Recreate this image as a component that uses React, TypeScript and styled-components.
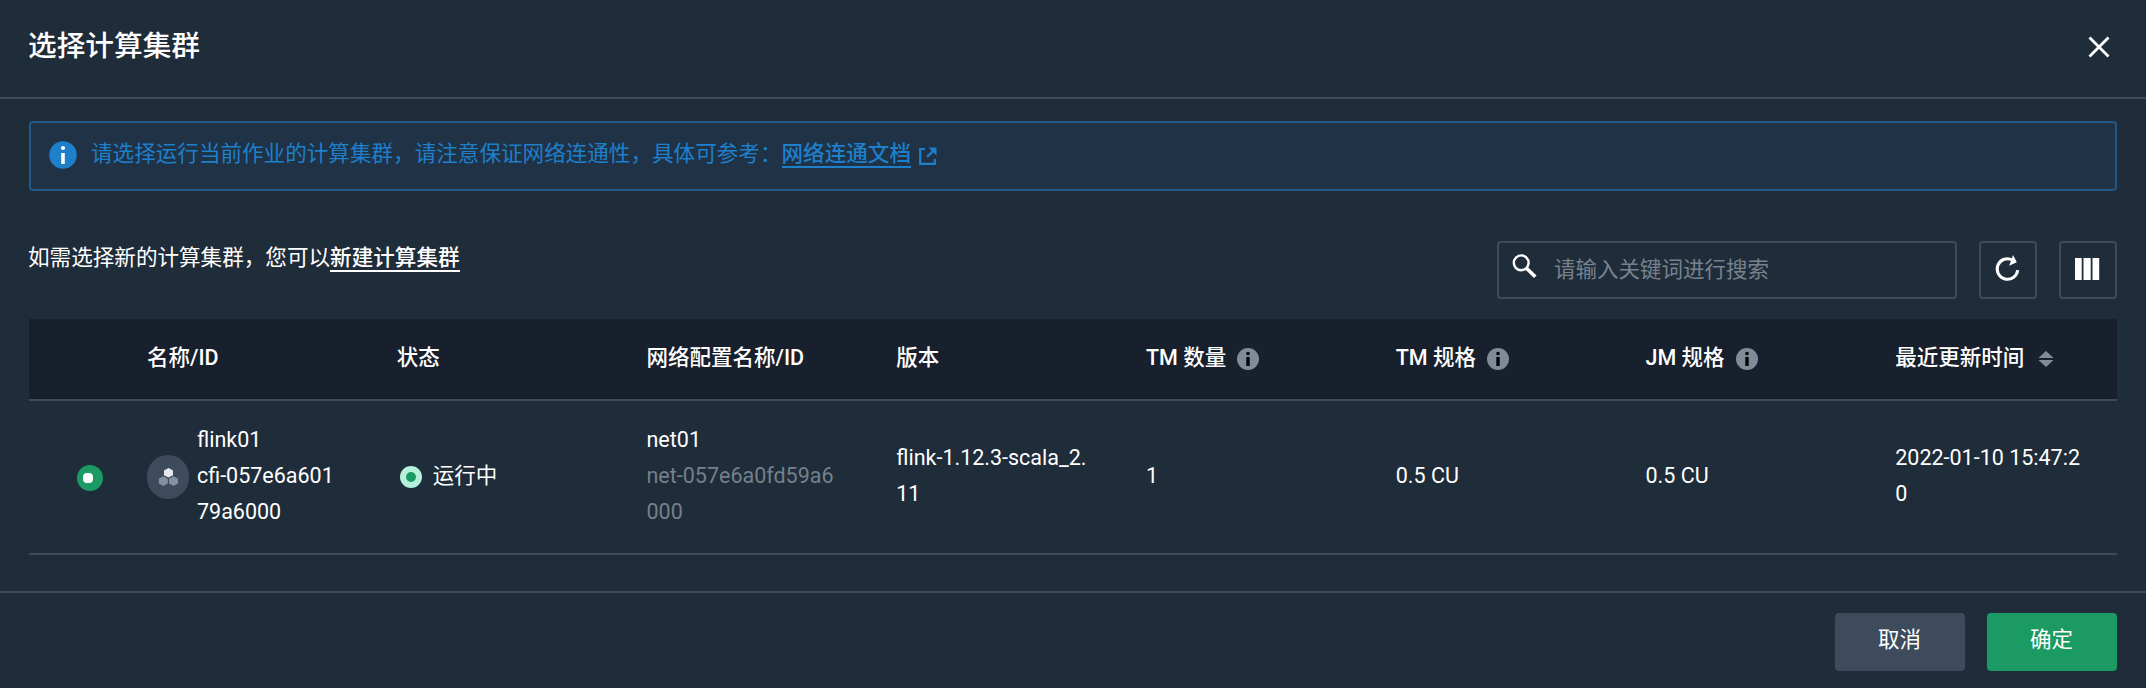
import React from "react";
import styled, { createGlobalStyle } from "styled-components";

const Global = createGlobalStyle`
  * { box-sizing: border-box; }
  body { margin: 0; background: #1f2c39; }
`;

const line = "#3d4b5d";

const Dialog = styled.div`
  display: flex;
  flex-direction: column;
  height: 688px;
  background: #1f2c39;
  color: #fff;
  font: 400 21.5px/36px Roboto, "Noto Sans CJK SC", sans-serif;
`;

const Header = styled.header`
  display: flex;
  justify-content: space-between;
  height: 99px;
  padding: 28px 36px 0 28px;
  border-bottom: 2px solid ${line};
`;

const Title = styled.h1`
  margin: 0;
  font-size: 28.67px;
  line-height: 36px;
  font-weight: 500;
`;

const CloseButton = styled.button`
  width: 22px;
  height: 22px;
  margin-top: 8px;
  padding: 0;
  border: 0;
  background: none;
  svg { display: block; }
`;

const Body = styled.main`
  flex: 1;
  padding: 22px 29px 0;
`;

const Notice = styled.section`
  display: flex;
  align-items: flex-start;
  height: 70px;
  padding: 13px 18px;
  border: 2px solid #205889;
  border-radius: 4px;
  background: #203245;
  color: #1e7fcb;
  font-size: 21.59px;
  > svg { margin: 5px 14px 0 0; flex: none; }
`;

const Link = styled.a<{ $color: string }>`
  color: ${(p) => p.$color};
  font-weight: 500;
  text-decoration: none;
  display: inline-block;
  height: 32px;
  border-bottom: 2px solid ${(p) => p.$color};
`;

const ExternalMark = styled.svg`
  margin-left: 8px;
  vertical-align: -4px;
`;

const Toolbar = styled.div`
  display: flex;
  gap: 22px;
  height: 58px;
  margin-top: 50px;
`;

const Hint = styled.p`
  flex: 1;
  margin: -1px 0 0 -1px;
  font-size: 21.58px;
`;

const Search = styled.label`
  display: flex;
  width: 460px;
  height: 58px;
  padding: 11px 13px;
  border: 2px solid ${line};
  border-radius: 4px;
  svg { flex: none; }
`;

const SearchInput = styled.input`
  flex: 1;
  min-width: 0;
  height: 32px;
  margin-left: 16px;
  padding: 0;
  border: 0;
  background: none;
  color: #fff;
  font: inherit;
  &::placeholder { color: #78828e; opacity: 1; }
`;

const IconButton = styled.button`
  width: 58px;
  height: 58px;
  padding: 0;
  display: grid;
  place-items: center;
  border: 2px solid ${line};
  border-radius: 4px;
  background: none;
  svg { overflow: visible; }
`;

const Table = styled.div`
  margin-top: 20px;
`;

const Row = styled.div<{ $head?: boolean }>`
  display: grid;
  grid-template-columns: 90px repeat(8, 249.75px);
  align-items: center;
  height: ${(p) => (p.$head ? 82 : 154)}px;
  padding-bottom: 2px;
  border-bottom: 2px solid ${line};
  background: ${(p) => (p.$head ? "#17202c" : "none")};
  font-weight: ${(p) => (p.$head ? 500 : 400)};
`;

const Cell = styled.div`
  display: flex;
  align-items: center;
  padding: 0 28px;
  word-break: break-all;
`;

const RadioCell = styled.div`
  padding: 3px 0 0 48px;
`;

const Radio = styled.span`
  display: grid;
  place-items: center;
  width: 26px;
  height: 26px;
  border-radius: 50%;
  background: #1b9a63;
  &::after {
    content: "";
    width: 10px;
    height: 10px;
    margin-right: 4px;
    border-radius: 4px;
    background: #fff;
  }
`;

const Avatar = styled.span`
  flex: none;
  display: grid;
  place-items: center;
  width: 42px;
  height: 44px;
  margin: 2px 8px 0 0;
  border-radius: 22px;
  background: ${line};
`;

const Muted = styled.div`
  color: #74808c;
`;

const StatusDot = styled.span`
  width: 22px;
  height: 22px;
  margin: 2px 11px 0 3px;
  border: 6px solid #b5f1da;
  border-radius: 50%;
  background: #1b9a63;
`;

const HeadIcon = styled.svg<{ $gap: number }>`
  flex: none;
  margin: 1px 0 0 ${(p) => p.$gap}px;
`;

const Footer = styled.footer`
  display: flex;
  justify-content: flex-end;
  gap: 22px;
  height: 97px;
  padding: 20px 29px 0 0;
  border-top: 2px solid ${line};
`;

const Button = styled.button<{ $primary?: boolean }>`
  width: 130px;
  height: 58px;
  padding: 0 1px 4px 0;
  border: 0;
  border-radius: 4px;
  background: ${(p) => (p.$primary ? "#1b9a63" : line)};
  color: #fff;
  font: inherit;
`;

const InfoIcon = () => (
  <HeadIcon $gap={11} width="22" height="22" viewBox="0 0 22 22">
    <circle cx="11" cy="11" r="11" fill="#7f8b98" />
    <circle cx="11" cy="5.6" r="1.8" fill="#000" />
    <path d="M9.3 9h3.4v9H9.3z" fill="#000" />
  </HeadIcon>
);

const SortIcon = () => (
  <HeadIcon $gap={14} width="16" height="16" viewBox="0 0 16 16">
    <path d="M8 0l7.6 7H.4zM8 16L.4 9h15.2z" fill="#7f8b98" />
  </HeadIcon>
);

const columns: { label: string; icon?: React.ReactNode }[] = [
  { label: "名称/ID" },
  { label: "状态" },
  { label: "网络配置名称/ID" },
  { label: "版本" },
  { label: "TM 数量", icon: <InfoIcon /> },
  { label: "TM 规格", icon: <InfoIcon /> },
  { label: "JM 规格", icon: <InfoIcon /> },
  { label: "最近更新时间", icon: <SortIcon /> },
];

export default function App() {
  return (
    <Dialog>
      <Global />
      <Header>
        <Title>选择计算集群</Title>
        <CloseButton aria-label="关闭">
          <svg width="22" height="22" viewBox="0 0 22 22" stroke="#fff" strokeWidth="2.8">
            <path d="M1.5 1.5l19 19M20.5 1.5l-19 19" />
          </svg>
        </CloseButton>
      </Header>
      <Body>
        <Notice>
          <svg width="28" height="28" viewBox="0 0 28 28">
            <circle cx="14" cy="14" r="13.8" fill="#1e7fcb" />
            <circle cx="14" cy="7" r="2.1" fill="#fff" />
            <path d="M12.2 12h3.6v11h-3.6z" fill="#fff" />
          </svg>
          <div>
            请选择运行当前作业的计算集群，请注意保证网络连通性，具体可参考：
            <Link $color="#1e7fcb">网络连通文档</Link>
            <ExternalMark width="18" height="18" viewBox="0 0 18 18">
              <path d="M6 2H1.2v14.8h14.6V12" fill="none" stroke="#1e7fcb" strokeWidth="2.2" />
              <path d="M8 10l7-7" stroke="#1e7fcb" strokeWidth="2.4" />
              <path d="M9.5 0.5H17.5V8.5z" fill="#1e7fcb" />
            </ExternalMark>
          </div>
        </Notice>
        <Toolbar>
          <Hint>
            如需选择新的计算集群，您可以<Link $color="#fff">新建计算集群</Link>
          </Hint>
          <Search>
            <svg width="26" height="26" viewBox="0 0 26 26" fill="none" stroke="#fff">
              <circle cx="9.2" cy="8.8" r="7.4" strokeWidth="2.4" />
              <path d="M14.5 14.2l8.8 8.6" strokeWidth="3.6" />
            </svg>
            <SearchInput placeholder="请输入关键词进行搜索" />
          </Search>
          <IconButton aria-label="刷新">
            <svg width="26" height="28" viewBox="0 0 26 28">
              <path d="M17.6 4.1A10.3 10.3 0 1 0 22.7 14.2" fill="none" stroke="#fff" strokeWidth="3" />
              <path d="M18 -1l3.8 7.2-7.6 3.6z" fill="#fff" />
            </svg>
          </IconButton>
          <IconButton aria-label="列设置">
            <svg width="26" height="24" viewBox="0 0 26 24" fill="#fff">
              <path d="M0 0h6.7v22H0zM8.5 0h7.2v22H8.5zM17.5 0h6.7v22h-6.7z" />
            </svg>
          </IconButton>
        </Toolbar>
        <Table>
          <Row $head>
            <span />
            {columns.map((c) => (
              <Cell key={c.label}>
                {c.label}
                {c.icon}
              </Cell>
            ))}
          </Row>
          <Row>
            <RadioCell>
              <Radio />
            </RadioCell>
            <Cell>
              <Avatar>
                <svg width="20" height="20" viewBox="0 0 20 20">
                  <path d="M10.5 1L15 3.4v4.800l-4.500 2.400L6 8.200V3.400z" fill="#e6e9ee" />
                  <path d="M5.300 9.300l4.500 2.400v4.800l-4.500 2.400L.8 16.500v-4.800zM15.500 9.300l4.500 2.400v4.800l-4.500 2.400L11 16.500v-4.800z" fill="#8490a0" />
                </svg>
              </Avatar>
              <div>
                <div>flink01</div>
                <div>cfi-057e6a60179a6000</div>
              </div>
            </Cell>
            <Cell>
              <StatusDot />
              运行中
            </Cell>
            <Cell>
              <div>
                <div>net01</div>
                <Muted>net-057e6a0fd59a6000</Muted>
              </div>
            </Cell>
            <Cell>flink-1.12.3-scala_2.11</Cell>
            <Cell>1</Cell>
            <Cell>0.5 CU</Cell>
            <Cell>0.5 CU</Cell>
            <Cell>2022-01-10 15:47:20</Cell>
          </Row>
        </Table>
      </Body>
      <Footer>
        <Button>取消</Button>
        <Button $primary>确定</Button>
      </Footer>
    </Dialog>
  );
}
